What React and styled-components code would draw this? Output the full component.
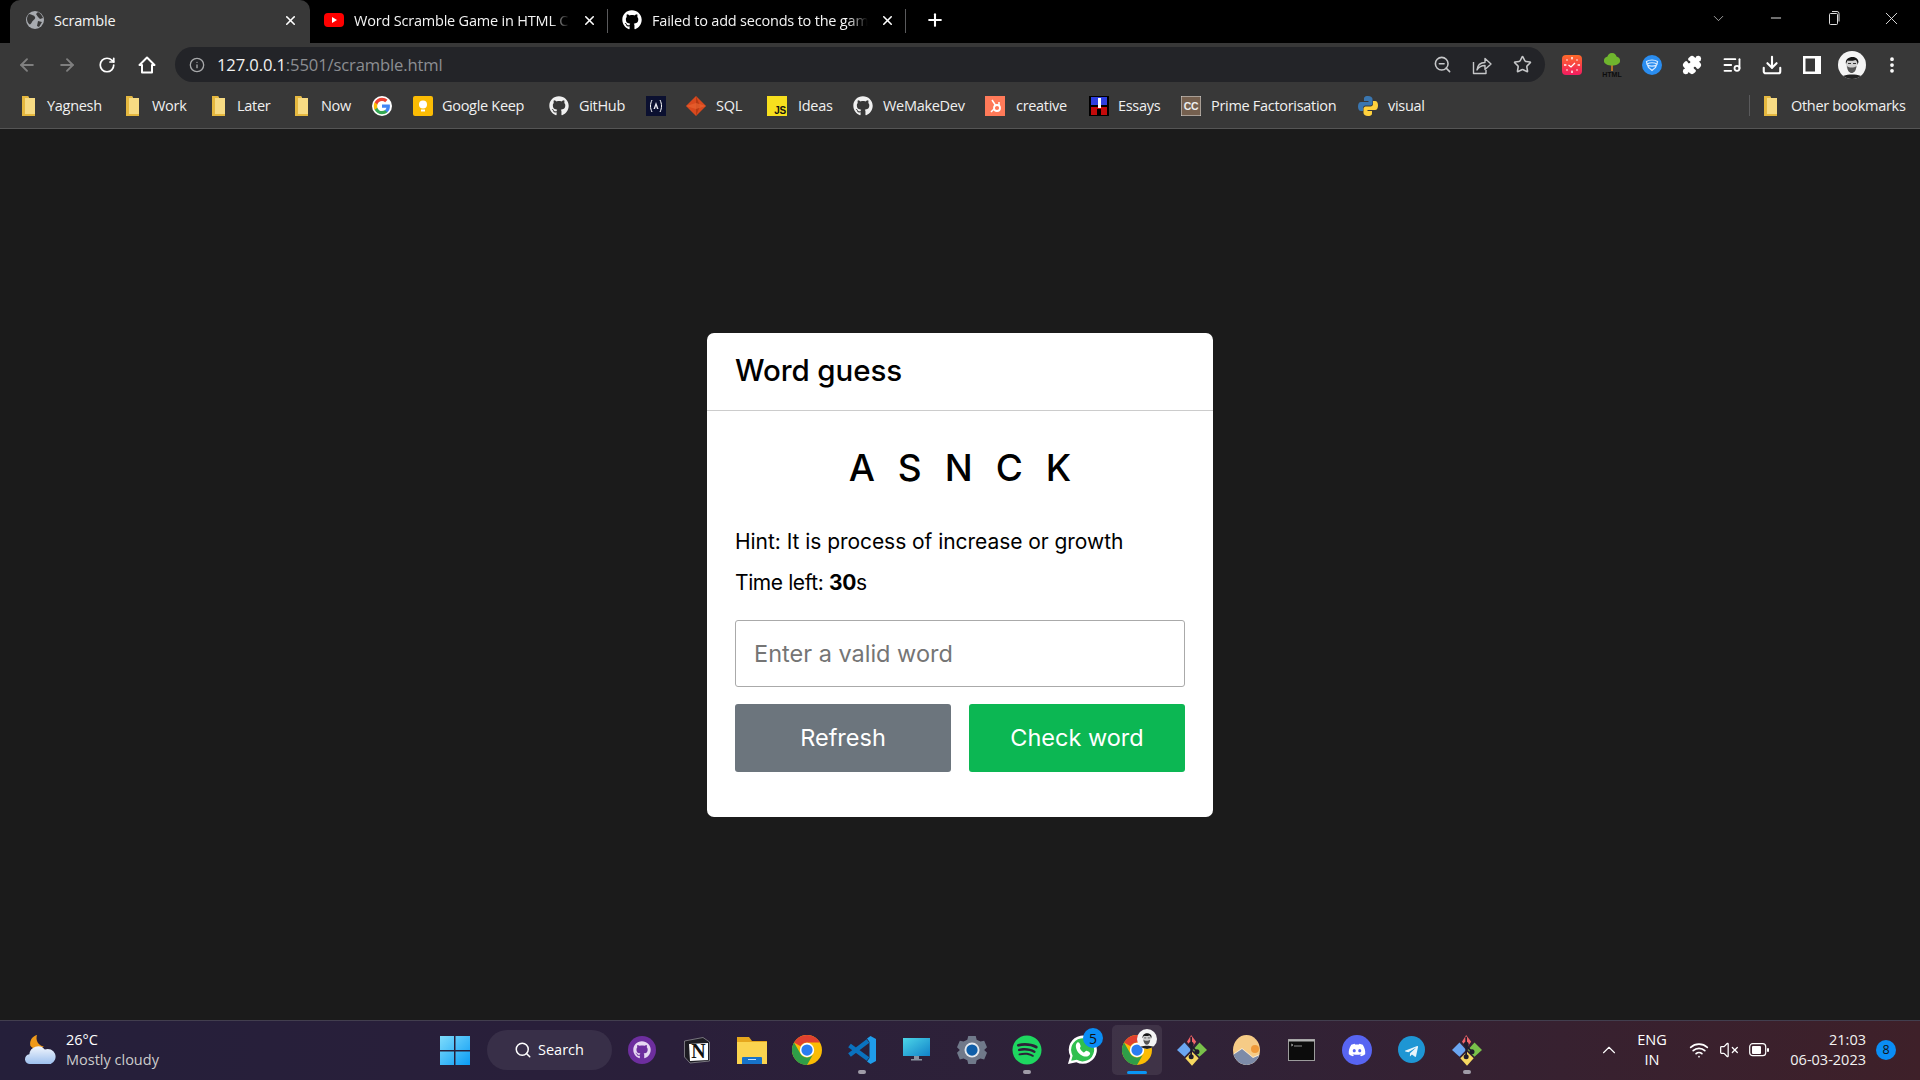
import React from "react";
import styled, { createGlobalStyle } from "styled-components";
import { FaGithub, FaSpotify, FaDiscord, FaTelegramPlane } from "react-icons/fa";
import { ArrowLeft, ArrowRight, RotateCw, Info, ZoomOut, Star, Puzzle, ListMusic, Download, MoreVertical, Plus, X, ChevronDown, ChevronUp, Minus, Search as SearchIcon, Wifi, VolumeX } from "lucide-react";

const Global = createGlobalStyle`
  html, body { margin: 0; padding: 0; background: #1b1b1b; }
  * { box-sizing: border-box; }
  #root { width: 1920px; height: 1080px; overflow: hidden; }
`;
const UI = `"Open Sans", "Noto Sans", sans-serif`;
const CARD = `Inter, "Noto Sans", sans-serif`;

const Shell = styled.div`display:flex;flex-direction:column;width:1920px;height:1080px;background:#1b1b1b;font-family:${UI};`;
const TabStrip = styled.div`height:43px;background:#000;display:flex;align-items:stretch;padding-left:10px;color:#fff;flex:none;`;
const Tab = styled.div`
  position:relative;width:${p=>p.$w}px;display:flex;align-items:center;padding:0 ${p=>p.$active?"12px":"11px"} 3px ${p=>p.$active?"15px":"14px"};gap:${p=>p.$active?"9px":"10px"};
  background:${p=>p.$active?"#383838":"transparent"};border-radius:${p=>p.$active?"10px 10px 0 0":"0"};
  ${p=>p.$sep?`&::after{content:"";position:absolute;right:0;top:9px;height:24px;width:1px;background:#5a5a5c;}`:""}
`;
const TabTitle = styled.span`flex:1;min-width:0;white-space:nowrap;font-size:14.5px;letter-spacing:-.2px;color:#f4f4f4;
  ${p=>p.$fade?`-webkit-mask-image:linear-gradient(90deg,#000 90%,transparent 99%);mask-image:linear-gradient(90deg,#000 90%,transparent 99%);`:""}`;
const TabPlus = styled.div`width:58px;display:flex;align-items:center;justify-content:center;padding-bottom:3px;`;
const WindowCtl = styled.div`margin-left:auto;display:flex;align-items:center;height:36px;color:#ddd;`;
const Ctl = styled.div`width:57.5px;display:flex;justify-content:center;align-items:center;`;
const Toolbar = styled.div`height:41px;background:#383838;display:flex;align-items:center;padding:2px 0 0 7px;flex:none;color:#e8eaed;`;
const NavBtn = styled.div`width:40px;height:36px;display:flex;align-items:center;justify-content:center;color:${p=>p.$dim?"#7f7f7f":"#fff"};flex:none;`;
const UrlBar = styled.div`width:1370px;margin-left:8px;height:35px;border-radius:18px;background:#232428;display:flex;align-items:center;padding-left:14px;padding-right:3px;flex:none;`;
const UrlText = styled.div`margin-left:12px;font-size:16.6px;letter-spacing:-.13px;color:#f1f1f1;flex:1;white-space:nowrap;`;
const UrlDim = styled.span`color:#8c8e92;`;
const UrlAction = styled.div`width:40px;display:flex;justify-content:center;color:#c6c7c9;`;
const ExtGroup = styled.div`display:flex;margin-left:7px;`;
const Bookmarks = styled.div`height:45px;background:#383838;border-bottom:1px solid #555;display:flex;align-items:center;padding:0 0 1px 21px;flex:none;color:#f0f0f0;`;
const Mark = styled.div`width:${p=>p.$w}px;display:flex;align-items:center;gap:${p=>p.$gap||10}px;font-size:14.5px;letter-spacing:-.3px;white-space:nowrap;flex:none;`;
const Divider = styled.div`width:1px;height:21px;background:#5a5a5c;margin-left:auto;margin-right:13px;`;
const Page = styled.main`flex:1;display:flex;align-items:center;justify-content:center;background:#1b1b1b;`;
const Card = styled.section`width:506px;height:484px;background:#fff;border-radius:7px;color:#000;font-family:${CARD};`;
const CardHead = styled.h1`margin:0;height:78px;border-bottom:1px solid #ccc;padding:0 28px 3px;display:flex;align-items:center;font-size:29.5px;font-weight:500;letter-spacing:-.1px;`;
const CardBody = styled.div`padding:34px 28px 0;`;
const Letters = styled.div`text-align:center;font-size:37px;font-weight:500;letter-spacing:23px;margin-right:-23px;line-height:46px;`;
const Details = styled.div`margin-top:30px;font-size:21px;letter-spacing:-.05px;line-height:41px;`;
const TimeLine = styled.div`letter-spacing:-.4px;`;
const WordInput = styled.input`display:block;width:450px;height:67px;margin-top:17px;border:1px solid #aaa;border-radius:3px;padding:0 18px;font:400 23.5px ${CARD};outline:none;&::placeholder{color:#757575;opacity:1;}`;
const Btns = styled.div`display:flex;gap:18px;margin-top:17px;`;
const Btn = styled.button`flex:1;height:68px;border:0;border-radius:3px;color:#fff;background:${p=>p.$c};font:400 23.5px ${CARD};`;
const Taskbar = styled.footer`height:60px;flex:none;border-top:1px solid #423e4e;padding-bottom:2px;background:linear-gradient(90deg,#251f3a 0%,#2a1f3a 35%,#2f2238 60%,#3e2029 100%);display:flex;align-items:center;color:#fff;`;
const Weather = styled.div`width:427px;display:flex;align-items:center;gap:9px;padding-left:24px;flex:none;`;
const WeatherText = styled.div`font-size:14.5px;line-height:20px;letter-spacing:0;`;
const Dim = styled.div`color:#ccc;`;
const Slot = styled.div`position:relative;width:55px;height:55px;flex:none;display:flex;align-items:center;justify-content:center;
  ${p=>p.$active?`&::before{content:"";position:absolute;inset:2.5px;border-radius:5px;background:#ffffff14;}`:""}
  & > svg{position:relative;}`;
const RunDot = styled.span`position:absolute;bottom:3px;left:50%;transform:translateX(-50%);width:${p=>p.$active?20:8}px;height:${p=>p.$active?3:4}px;border-radius:2px;background:${p=>p.$active?"#0a96f5":"#a09ca8"};`;
const Search = styled.div`width:125px;height:40px;margin:0 2.5px 0 4.5px;border-radius:20px;background:#382f48;display:flex;align-items:center;justify-content:center;gap:6px;font-size:14.5px;flex:none;`;
const Tray = styled.div`margin-left:auto;display:flex;align-items:center;height:100%;`;
const Lang = styled.div`width:46px;text-align:center;font-size:14.5px;line-height:20px;margin:0 9px;`;
const TrayIcon = styled.div`width:30px;display:flex;justify-content:center;`;
const Clock = styled.div`width:92px;text-align:right;font-size:14.5px;line-height:20px;color:#f2f2f2;`;
const NotifBadge = styled.div`width:20px;height:20px;border-radius:50%;background:#0a8df5;color:#111;font-size:12.5px;display:flex;align-items:center;justify-content:center;margin:0 24px 0 10px;`;
const Count = styled.span`position:absolute;top:6px;right:6px;width:20px;height:20px;border-radius:50%;background:#0a8df5;color:#111;font-size:14px;display:flex;align-items:center;justify-content:center;`;
const AvatarOver = styled.span`position:absolute;top:7px;right:7px;display:flex;`;

const Globe = () => <svg width="20" height="20" viewBox="0 0 20 20"><circle cx="10" cy="10" r="9" fill="#a8abb0"/><path d="M4 4c3 1 5 1 6 3s-2 3-3 5-2 3-3 2-2-3-2-5 1-4 2-5zM13 2c2 1 4 3 5 6l-3 1-2-2-2-3zM13 11l4 1-3 5-2-1z" fill="#383838"/></svg>;
const Yt = ({s=20}) => <svg width={s} height={s} viewBox="0 0 20 20"><rect x="0" y="3" width="20" height="14" rx="4" fill="#f00"/><path d="M8 7l5 3-5 3z" fill="#fff"/></svg>;
const Folder = () => <svg width="15" height="20" viewBox="0 0 15 20"><path d="M1 0h6l1 2h6v18H1z" fill="#f7db83"/><path d="M1 0h6l1 2H4v16h10v2H1z" fill="#e5b83f"/></svg>;
const GoogleG = () => <svg width="20" height="20" viewBox="0 0 48 48"><circle cx="24" cy="24" r="24" fill="#fff"/><path d="M43 24.500c0-1.400-.1-2.700-.4-4H24v7.600h10.700c-.5 2.500-1.900 4.600-4 6v5h6.400c3.800-3.500 5.900-8.600 5.900-14.600z" fill="#4285f4"/><path d="M24 44c5.400 0 9.900-1.800 13.100-4.800l-6.400-5c-1.800 1.200-4 1.900-6.700 1.900-5.200 0-9.600-3.500-11.100-8.200H6.300v5.100C9.600 39.500 16.300 44 24 44z" fill="#34a853"/><path d="M12.900 27.900c-.8-2.500-.8-5.300 0-7.800V15H6.300c-2.800 5.600-2.800 12.400 0 18z" fill="#fbbc05"/><path d="M24 11.900c2.900 0 5.500 1 7.600 3l5.700-5.700C33.900 6 29.400 4 24 4 16.300 4 9.600 8.500 6.300 15l6.600 5.100c1.500-4.700 5.900-8.200 11.100-8.200z" fill="#ea4335"/></svg>;
const Keep = () => <svg width="20" height="20" viewBox="0 0 20 20"><rect width="20" height="20" rx="2" fill="#fbbc04"/><circle cx="10" cy="8.500" r="4" fill="#fff"/><rect x="8" y="13.500" width="4" height="2" fill="#fff"/></svg>;
const AwsLike = () => <svg width="20" height="20" viewBox="0 0 20 20"><rect width="20" height="20" fill="#0b1030"/><path d="M6 4c-2 4-2 8 0 12M14 4c2 4 2 8 0 12" stroke="#fff" strokeWidth="1" fill="none"/><path d="M10 6l2.500 7h-1.500l-1-3-1 3h-1.500z" fill="#e8e8f0"/></svg>;
const Sql = () => <svg width="20" height="20" viewBox="0 0 20 20"><path d="M10 0l10 10-10 10L0 10z" fill="#d9491e"/><path d="M10 0l4 10-4 10z" fill="#b53a14"/><path d="M0 10l10-3 10 3-10 3z" fill="#e8622f" opacity=".7"/></svg>;
const Js = () => <svg width="20" height="20" viewBox="0 0 20 20"><rect width="20" height="20" fill="#f7df1e"/><text x="19" y="18" textAnchor="end" fontSize="10" fontWeight="700" fontFamily="Liberation Sans" fill="#111">JS</text></svg>;
const Hub = () => <svg width="20" height="20" viewBox="0 0 20 20"><rect width="20" height="20" fill="#ff7a59"/><path d="M7 4l4 6M14 6v4M6 16l3-3" stroke="#fff" strokeWidth="1.500"/><circle cx="12" cy="12" r="3" fill="none" stroke="#fff" strokeWidth="1.800"/></svg>;
const Essays = () => <svg width="20" height="20" viewBox="0 0 20 20"><rect width="20" height="20" fill="#000"/><rect x="2" y="1" width="16" height="8" fill="#2f3fe0"/><rect x="2" y="11" width="16" height="8" fill="#c40a0a"/><rect x="9" y="2" width="3" height="10" fill="#fff"/><rect x="8" y="13" width="4" height="6" fill="#000"/></svg>;
const Cc = () => <svg width="20" height="20" viewBox="0 0 20 20"><rect width="20" height="20" fill="#75604f" stroke="#ddd"/><text x="10" y="14" textAnchor="middle" fontSize="10.500" fontWeight="700" fontFamily="Liberation Sans" fill="#eee">CC</text></svg>;
const Python = () => <svg width="20" height="20" viewBox="0 0 20 20"><path d="M10 0C6 0 6 2 6 3v2h4.500v1H3C1 6 0 8 0 10.500S1 15 3 15h2v-3c0-1.500 1-2.500 2.500-2.500h5c1 0 2-1 2-2V3c0-1.500-1.500-3-4.500-3z" fill="#3a76b0"/><path d="M10 20c4 0 4-2 4-3v-2H9.500v-1H17c2 0 3-2 3-4.500S19 5 17 5h-2v3c0 1.500-1 2.500-2.500 2.500h-5c-1 0-2 1-2 2V17c0 1.500 1.500 3 4.500 3z" fill="#ffd13d"/></svg>;
const HomeIcon = () => <svg width="20" height="20" viewBox="0 0 20 20" fill="none" stroke="#fff" strokeWidth="2" strokeLinejoin="round"><path d="M10 2.500l7.500 7.500H15v7.500H5V10H2.500z"/></svg>;
const ShareIcon = () => <svg width="20" height="20" viewBox="0 0 20 20" fill="none" stroke="#c6c7c9" strokeWidth="1.400" strokeLinejoin="round"><path d="M1.500 7v11.500H14V15"/><path d="M5 15c.5-5 3.500-7.500 8-7.500V3.500l6 5.500-6 5.500v-4c-3.500 0-6 1-8 4.500z"/></svg>;
const Clockify = () => <svg width="20" height="20" viewBox="0 0 20 20"><defs><linearGradient id="cl" x1="0" y1="0" x2="0" y2="1"><stop offset="0" stopColor="#fd6a2a"/><stop offset="1" stopColor="#f21b60"/></linearGradient></defs><rect width="20" height="20" rx="4" fill="url(#cl)"/><path d="M6.500 10l2.500 2 4-4" stroke="#fff" strokeWidth="1.300" fill="none"/><g fill="#fff"><rect x="9.300" y="2" width="1.400" height="2.400"/><rect x="9.300" y="15.600" width="1.400" height="2.400"/><rect x="2" y="9.300" width="2.400" height="1.400"/><rect x="15.600" y="9.300" width="2.400" height="1.400"/><circle cx="5" cy="5" r=".8"/><circle cx="15" cy="5" r=".8"/><circle cx="5" cy="15" r=".8"/><circle cx="15" cy="15" r=".8"/></g></svg>;
const Tree = () => <svg width="22" height="24" viewBox="0 0 22 24"><rect x="10" y="8" width="2" height="10" fill="#b5702a"/><path d="M11 0c3 0 4 2 4.500 3.500 2.500.5 4 2.500 3.500 5s-4 4-8 4-7.500-1.500-8-4 1-4.500 3.500-5C7 2 8 0 11 0z" fill="#6fb52e"/><text x="11" y="23.500" textAnchor="middle" fontSize="7" fontWeight="700" fontFamily="Liberation Sans" fill="#0c0c0c">HTML</text></svg>;
const Shield = () => <svg width="20" height="20" viewBox="0 0 20 20"><circle cx="10" cy="10" r="10" fill="#2a8df0"/><path d="M4.500 6.500c3-2 8-2 11 0l-.5 2.500c-3-1.500-7-1.500-10 0zM5.500 10c3 1.500 6 1.500 9 0l-1 2.500-3.500 3-3.500-3z" fill="none" stroke="#d7eaff" strokeWidth="1.200"/></svg>;
const SidePanel = () => <svg width="20" height="20" viewBox="0 0 20 20"><rect x="1" y="1" width="18" height="18" fill="#fff"/><rect x="3.500" y="3.500" width="9.500" height="13" fill="#383838"/></svg>;
const Avatar = ({s=28}) => <svg width={s} height={s} viewBox="0 0 28 28"><defs><clipPath id="av"><circle cx="14" cy="14" r="14"/></clipPath></defs><g clipPath="url(#av)"><rect width="28" height="28" fill="#f4f4f4"/><path d="M8 11c0-5 11-5 11 0 0 6-2 10-5.500 10S8 17 8 11z" fill="#cfcfcf"/><path d="M8 13C6 5 20 3 20.500 11l-1 3c0-3-1-4.500-2-5-3 1-6 1-8 .5-.5 1-1 2-1.500 3.500z" fill="#151515"/><path d="M9 15c2 2 7 2 9.500 0-.5 5-2.500 7-4.800 7S9.500 20 9 15z" fill="#555"/><rect x="10" y="12" width="3" height="1" fill="#333"/><rect x="15" y="12" width="3" height="1" fill="#333"/><path d="M1 28c2-6 24-6 26 0z" fill="#222"/></g></svg>;
const Restore = () => <svg width="14" height="16" viewBox="0 0 14 16" fill="none" stroke="#ddd"><rect x="2.500" y="3.500" width="8" height="11" rx="1"/><path d="M5 1.500h5a2 2 0 0 1 2 2v8"/></svg>;
const WinLogo = () => <svg width="30" height="30" viewBox="0 0 30 30"><defs><linearGradient id="w" x1="0" y1="0" x2="1" y2="1"><stop offset="0" stopColor="#7fdcfb"/><stop offset="1" stopColor="#0a9bf5"/></linearGradient></defs><path d="M0 1h14v14H0zM15.500 1H30v14H15.500zM0 16.500h14V30H0zM15.500 16.500H30V30H15.500z" fill="url(#w)"/></svg>;
const GhPurple = () => <svg width="28" height="28" viewBox="0 0 28 28"><circle cx="14" cy="14" r="14" fill="#6d2e9e"/><foreignObject x="5" y="5" width="18" height="18"><FaGithub size={18} color="#e6d8f2"/></foreignObject></svg>;
const Notion = () => <svg width="28" height="28" viewBox="0 0 28 28"><path d="M1.500 5L20 1.500 26.500 6v19L7 27l-5.500-6z" fill="#1c1b22" stroke="#8d8c92" strokeWidth=".8"/><path d="M6 8l19-1v17L7 25z" fill="#fff"/><text x="15.500" y="22" textAnchor="middle" fontSize="20" fontWeight="700" fontFamily="Liberation Serif" fill="#111">N</text></svg>;
const Files = () => <svg width="30" height="28" viewBox="0 0 30 28"><path d="M0 1h12l3 4h15v23H0z" fill="#e6a71d"/><path d="M0 6h30v22H0z" fill="#fbd44f"/><rect x="5" y="21" width="20" height="8" rx="1" fill="#1773c9"/><rect x="11" y="23" width="8" height="1" fill="#bfe0ff"/></svg>;
const Chrome = ({s=30}) => <svg width={s} height={s} viewBox="0 0 48 48"><circle cx="24" cy="24" r="24" fill="#fbbc04"/><path d="M24 0a24 24 0 0 1 20.800 12H24a12 12 0 0 0-10.400 6L3.200 12A24 24 0 0 1 24 0z" fill="#e0402f"/><path d="M3.200 12L13.600 30a12 12 0 0 0 20.800 0L24 48A24 24 0 0 1 3.200 12z" fill="#2f9e48"/><circle cx="24" cy="24" r="11.500" fill="#fff"/><circle cx="24" cy="24" r="9" fill="#2a7df0"/></svg>;
const VsCode = () => <svg width="30" height="30" viewBox="0 0 30 30"><path d="M2.500 10.500L21 24M2.500 20L21 6" stroke="#0a72bf" strokeWidth="4.500"/><path d="M20 3.500L23.500 1 29 4v22l-5.500 3-3.500-2.500L22.500 23V7z" fill="#1f9cea"/></svg>;
const Monitor = () => <svg width="27" height="27" viewBox="0 0 27 27"><defs><linearGradient id="m" x1="0" y1="0" x2="1" y2="1"><stop offset="0" stopColor="#4cd6e8"/><stop offset="1" stopColor="#1182c9"/></linearGradient></defs><rect y="2" width="27" height="18" fill="url(#m)"/><rect x="11" y="20" width="5" height="3" fill="#8a93a0"/><rect x="8" y="23" width="11" height="1.500" fill="#8a93a0"/></svg>;
const Gear = () => <svg width="30" height="30" viewBox="0 0 32 32"><path d="M12 1h8l1 4 4 2 4-1 3 7-3 3 3 3-3 7-4-1-4 2-1 4h-8l-1-4-4-2-4 1-3-7 3-3-3-3 3-7 4 1 4-2z" fill="#70798a"/><circle cx="16" cy="16" r="8" fill="#e4e9ee"/><circle cx="16" cy="16" r="6" fill="#0f5ea8"/></svg>;
const Git = () => <svg width="30" height="32" viewBox="0 0 36 38"><path d="M17 1l6 8-5 7-6-7z" fill="#f0646a"/><path d="M9 10l8 9-8 8-9-8z" fill="#6aa6f2"/><path d="M27 10l9 9-9 8-8-8z" fill="#79c14a"/><path d="M18 21l8 8-8 9-8-9z" fill="#f6d860"/><path d="M17 3v24M17 14l8 8" stroke="#1f1c2c" strokeWidth="2"/><circle cx="17" cy="27" r="3" fill="#1f1c2c"/><circle cx="24" cy="21" r="3" fill="#1f1c2c"/><circle cx="17" cy="12" r="3" fill="#1f1c2c"/></svg>;
const Photo = () => <svg width="27" height="30" viewBox="0 0 27 30"><defs><clipPath id="pc"><ellipse cx="13.500" cy="15" rx="13.500" ry="15"/></clipPath></defs><g clipPath="url(#pc)"><rect width="27" height="30" fill="#f6cb86"/><circle cx="22" cy="14" r="4" fill="#ef9a3a"/><path d="M0 19l9-6 11 9 7-3v11H0z" fill="#fff" opacity=".6"/><path d="M0 20l9-6 11 9 7-3v10H0z" fill="#7d8ba8"/></g></svg>;
const Terminal = () => <svg width="27" height="22" viewBox="0 0 27 22"><rect x=".5" y=".5" width="26" height="21" fill="#0c0c0c" stroke="#9c9c9c"/><rect x=".5" y=".5" width="26" height="2" fill="#b4b4b4"/><path d="M3 5l2 1-2 1M6 7h8" stroke="#ccc" fill="none" strokeWidth=".7"/></svg>;
const Discord = () => <svg width="30" height="30" viewBox="0 0 30 30"><circle cx="15" cy="15" r="15" fill="#5865f2"/><foreignObject x="6" y="6" width="18" height="18"><FaDiscord size={18} color="#fff"/></foreignObject></svg>;
const Telegram = () => <svg width="27" height="27" viewBox="0 0 27 27"><circle cx="13.500" cy="13.500" r="13.500" fill="#1e96d4"/><foreignObject x="6" y="6" width="15" height="15"><FaTelegramPlane size={15} color="#e8f4fb"/></foreignObject></svg>;
const Whats = () => <svg width="30" height="30" viewBox="0 0 32 32"><path d="M1 31l2.500-8.500A15 15 0 1 1 10 29z" fill="#fff"/><path d="M4.500 27.500l1.500-5.500A12.300 12.300 0 1 1 10.500 26.500z" fill="#30c04f"/><path d="M11 8c2-1.500 3 2 3.500 3.500s-1.500 2 0 4 3 3.500 4 3 1.500-2 3-1.500 4 2 3 3.500c-2 3.500-6 3-10 .5S7.500 11 11 8z" fill="#fff"/></svg>;
const Cloud = () => <svg width="33" height="30" viewBox="0 0 33 31"><path d="M13 0c-2 5 1 11 7 12-5 4-11 3-14-1C5 6 8 1 13 0z" fill="#f09a1a"/><defs><linearGradient id="c" x1="0" y1="0" x2="0" y2="1"><stop offset="0" stopColor="#f2f6fd"/><stop offset="1" stopColor="#9dc0ee"/></linearGradient></defs><path d="M6 30a5 5 0 0 1-1-10 9 9 0 0 1 16-5 8 8 0 0 1 6 15z" fill="url(#c)"/></svg>;
const Battery = () => <svg width="20" height="14" viewBox="0 0 20 14"><rect x=".7" y=".7" width="16" height="12" rx="3" fill="none" stroke="#fff" strokeWidth="1.200"/><rect x="3" y="3" width="9" height="8" rx="1" fill="#fff"/><rect x="18" y="5" width="2" height="4" rx="1" fill="#fff"/></svg>;

const marks = [
  [<Folder/>, "Yagnesh", 104, 11], [<Folder/>, "Work", 86, 12], [<Folder/>, "Later", 83, 11], [<Folder/>, "Now", 78, 12],
  [<GoogleG/>, "", 41], [<Keep/>, "Google Keep", 136, 9], [<FaGithub size={20}/>, "GitHub", 97], [<AwsLike/>, "", 40],
  [<Sql/>, "SQL", 81], [<Js/>, "Ideas", 86, 11], [<FaGithub size={20}/>, "WeMakeDev", 132], [<Hub/>, "creative", 104, 11],
  [<Essays/>, "Essays", 92, 9], [<Cc/>, "Prime Factorisation", 177], [<Python/>, "visual", 100],
];
const apps = [
  [<GhPurple/>], [<Notion/>], [<Files/>], [<Chrome/>], [<VsCode/>, "dot"], [<Monitor/>], [<Gear/>],
  [<FaSpotify size={30} color="#1ed760"/>, "dot"], [<Whats/>, null, "5"], [<Chrome/>, "active", null, true],
  [<Git/>], [<Photo/>], [<Terminal/>], [<Discord/>], [<Telegram/>], [<Git/>, "dot"],
];

export default function App() {
  return (
    <Shell>
      <Global/>
      <TabStrip>
        <Tab $w={300} $active><Globe/><TabTitle>Scramble</TabTitle><X size={15} strokeWidth={2.500}/></Tab>
        <Tab $w={298} $sep><Yt/><TabTitle $fade>Word Scramble Game in HTML C</TabTitle><X size={15} strokeWidth={2.500}/></Tab>
        <Tab $w={298} $sep><FaGithub size={20}/><TabTitle $fade>Failed to add seconds to the gam</TabTitle><X size={15} strokeWidth={2.500}/></Tab>
        <TabPlus><Plus size={20} strokeWidth={2.500}/></TabPlus>
        <WindowCtl>
          <Ctl><ChevronDown size={17} strokeWidth={1}/></Ctl>
          <Ctl><Minus size={16} strokeWidth={1.500}/></Ctl>
          <Ctl><Restore/></Ctl>
          <Ctl><X size={21} strokeWidth={1.100}/></Ctl>
        </WindowCtl>
      </TabStrip>
      <Toolbar>
        <NavBtn $dim><ArrowLeft size={20} strokeWidth={2.300}/></NavBtn>
        <NavBtn $dim><ArrowRight size={20} strokeWidth={2.300}/></NavBtn>
        <NavBtn><RotateCw size={18} strokeWidth={2.300}/></NavBtn>
        <NavBtn><HomeIcon/></NavBtn>
        <UrlBar>
          <Info size={16} color="#a8a9ab"/>
          <UrlText>127.0.0.1<UrlDim>:5501/scramble.html</UrlDim></UrlText>
          <UrlAction><ZoomOut size={19}/></UrlAction>
          <UrlAction><ShareIcon/></UrlAction>
          <UrlAction><Star size={19}/></UrlAction>
        </UrlBar>
        <ExtGroup>
          <NavBtn><Clockify/></NavBtn>
          <NavBtn><Tree/></NavBtn>
          <NavBtn><Shield/></NavBtn>
          <NavBtn><Puzzle size={20} fill="#fff"/></NavBtn>
          <NavBtn><ListMusic size={20} strokeWidth={2.200}/></NavBtn>
          <NavBtn><Download size={22} strokeWidth={2.300}/></NavBtn>
          <NavBtn><SidePanel/></NavBtn>
          <NavBtn><Avatar/></NavBtn>
          <NavBtn><MoreVertical size={20} strokeWidth={2.500}/></NavBtn>
        </ExtGroup>
      </Toolbar>
      <Bookmarks>
        {marks.map(([icon, label, w, gap], i) => <Mark key={i} $w={w} $gap={gap}>{icon}{label && <span>{label}</span>}</Mark>)}
        <Divider/>
        <Mark $w={157} $gap={13}><Folder/><span>Other bookmarks</span></Mark>
      </Bookmarks>
      <Page>
        <Card>
          <CardHead>Word guess</CardHead>
          <CardBody>
            <Letters>ASNCK</Letters>
            <Details>
              <div>Hint: It is process of increase or growth</div>
              <TimeLine>Time left: <b>30</b>s</TimeLine>
            </Details>
            <WordInput placeholder="Enter a valid word" readOnly/>
            <Btns>
              <Btn $c="#6c757d">Refresh</Btn>
              <Btn $c="#0cb753">Check word</Btn>
            </Btns>
          </CardBody>
        </Card>
      </Page>
      <Taskbar>
        <Weather>
          <Cloud/>
          <WeatherText><div>26°C</div><Dim>Mostly cloudy</Dim></WeatherText>
        </Weather>
        <Slot><WinLogo/></Slot>
        <Search><SearchIcon size={18}/>Search</Search>
        {apps.map(([icon, state, count, avatar], i) => (
          <Slot key={i} $active={state==="active"}>
            {icon}
            {count && <Count>{count}</Count>}
            {avatar && <AvatarOver><Avatar s={20}/></AvatarOver>}
            {state && <RunDot $active={state==="active"}/>}
          </Slot>
        ))}
        <Tray>
          <ChevronUp size={22} strokeWidth={1.200}/>
          <Lang>ENG<br/>IN</Lang>
          <TrayIcon><Wifi size={20}/></TrayIcon>
          <TrayIcon><VolumeX size={20} strokeWidth={1.500}/></TrayIcon>
          <TrayIcon><Battery/></TrayIcon>
          <Clock>21:03<br/>06-03-2023</Clock>
          <NotifBadge>8</NotifBadge>
        </Tray>
      </Taskbar>
    </Shell>
  );
}
